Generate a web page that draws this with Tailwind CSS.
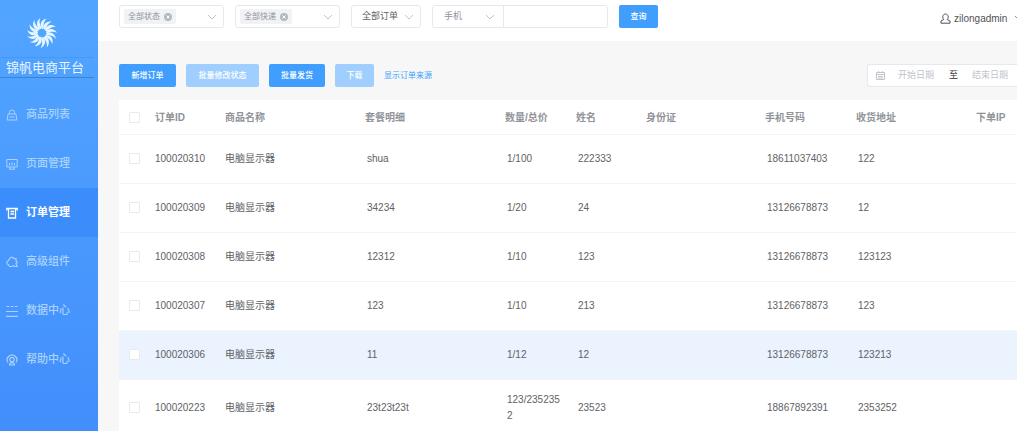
<!DOCTYPE html>
<html lang="zh-CN">
<head>
  <meta charset="UTF-8">
  <title>锦帆电商平台</title>
  <meta name="viewport" content="width=device-width, initial-scale=1.0">
  <script src="https://cdn.jsdelivr.net/npm/@tailwindcss/browser@4"></script>
</head>
<body class="flex h-screen overflow-hidden bg-[#f7f7f7] font-['Liberation_Sans','Noto_Sans_CJK_SC',sans-serif] text-[10px] text-[#606266]">

  <!-- icons -->
  <svg class="hidden">
    <symbol id="chevron" viewBox="0 0 10 10"><path d="M1 3l4 4 4-4" fill="none" stroke="currentColor" stroke-width="1"/></symbol>
    <symbol id="blade" viewBox="-16 -16 32 32"><path d="M.5-4C-3-7.500-1.500-13 4.500-14.500C2-12 1-8.500 2-4.800C1.700-4.200 1-4 .5-4Z"/></symbol>
  </svg>

  <aside class="w-[98px] shrink-0 bg-linear-to-b from-[#52a5ff] to-[#428efc] text-white">
    <div class="flex h-[57px] items-end pb-2 pl-[26px]">
      <svg class="size-8" viewBox="-16 -16 32 32" fill="#e4f6ff">
        <use href="#blade" x="-16" y="-16" width="32" height="32"/>
        <use href="#blade" x="-16" y="-16" width="32" height="32" transform="rotate(24)"/>
        <use href="#blade" x="-16" y="-16" width="32" height="32" transform="rotate(48)"/>
        <use href="#blade" x="-16" y="-16" width="32" height="32" transform="rotate(72)"/>
        <use href="#blade" x="-16" y="-16" width="32" height="32" transform="rotate(96)"/>
        <use href="#blade" x="-16" y="-16" width="32" height="32" transform="rotate(120)"/>
        <use href="#blade" x="-16" y="-16" width="32" height="32" transform="rotate(144)"/>
        <use href="#blade" x="-16" y="-16" width="32" height="32" transform="rotate(168)"/>
        <use href="#blade" x="-16" y="-16" width="32" height="32" transform="rotate(192)"/>
        <use href="#blade" x="-16" y="-16" width="32" height="32" transform="rotate(216)"/>
        <use href="#blade" x="-16" y="-16" width="32" height="32" transform="rotate(240)"/>
        <use href="#blade" x="-16" y="-16" width="32" height="32" transform="rotate(264)"/>
        <use href="#blade" x="-16" y="-16" width="32" height="32" transform="rotate(288)"/>
        <use href="#blade" x="-16" y="-16" width="32" height="32" transform="rotate(312)"/>
        <use href="#blade" x="-16" y="-16" width="32" height="32" transform="rotate(336)"/>
      </svg>
    </div>
    <h1 class="mr-1 mb-3 h-[21px] border-y border-t-[#4a97ec] border-b-[#3f83d0] pl-1.5 text-[13px] leading-[20px] whitespace-nowrap text-[#e8f5ff]">锦帆电商平台</h1>
    <nav class="text-[11px] font-medium text-[#a9d2ff]">
      <a href="#" class="flex h-[49px] items-center gap-2 pl-1.5">
        <svg class="size-3" viewBox="0 0 12 12" fill="none" stroke="currentColor"><path d="M2 5h8l.8 6H1.200zM3.500 5V3.500a2.500 2.500 0 015 0V5M3.500 8h5"/></svg>
        商品列表</a>
      <a href="#" class="flex h-[49px] items-center gap-2 pl-1.5">
        <svg class="size-3" viewBox="0 0 12 12" fill="none" stroke="currentColor"><path d="M.8 1.500h10.400v7.500H.8zM3.500 5v2.500M6 4v3.500M8.500 5v2.500M4 9v2M8 9v2M3 11.200h6"/></svg>
        页面管理</a>
      <a href="#" class="flex h-[49px] items-center gap-2 bg-[#3a8dfa] pl-1.5 font-bold text-white">
        <svg class="size-3" viewBox="0 0 12 12" fill="none" stroke="currentColor" stroke-width="1.300"><path d="M.8 3.500V1.500h10.400v2M2.500 1.500v9.500h7V1.500M4.500 4.500h3.500M4.500 7h3.500"/></svg>
        订单管理</a>
      <a href="#" class="flex h-[49px] items-center gap-2 pl-1.5">
        <svg class="size-3" viewBox="0 0 12 12" fill="none" stroke="currentColor" stroke-width="1.200"><path d="M3.500 3C4 1 7 .5 7.500 2.500H10V5C11.500 5 11.500 7.500 10 7.500L11.200 10.500H8.500C8 9.500 6.500 9.500 6 10.500H3.500L2.500 8.500C.3 8.500.3 5.500 2 5Z"/></svg>
        高级组件</a>
      <a href="#" class="flex h-[49px] items-center gap-2 pl-1.5">
        <svg class="size-3" viewBox="0 0 12 12" fill="none" stroke="currentColor" stroke-width="1.200"><path d="M.5 1.500h3M5 1.500h2.500M9 1.500h2.500M0 6.500h12M0 11.400h12"/></svg>
        数据中心</a>
      <a href="#" class="flex h-[49px] items-center gap-2 pl-1.5">
        <svg class="size-3" viewBox="0 0 12 12" fill="none" stroke="currentColor" stroke-width="1.200"><path d="M2 8.500a4.800 4.800 0 118 0M3.500 11c0-1.500 1-2.300 2.500-2.300s2.500.8 2.500 2.300z"/><circle cx="6" cy="5.500" r="2.200"/></svg>
        帮助中心</a>
    </nav>
  </aside>

  <main class="flex min-w-0 flex-1 flex-col overflow-hidden">
    <header class="flex h-[41px] shrink-0 items-start bg-white pt-[5px] pl-[21px] text-[9px]">
      <div class="flex flex-1 gap-[11px]">
        <div class="flex h-[23px] w-[105px] items-center rounded-[3px] border border-[#e6e8ec] pr-1.5 pl-1">
          <span class="flex h-[15px] items-center gap-1 rounded-[2px] bg-[#f0f2f5] px-1 text-[8px] whitespace-nowrap text-[#909399]">全部状态
            <button aria-label="移除全部状态" class="flex size-2 items-center justify-center rounded-full bg-[#b4b8bf] text-white"><svg class="size-1" viewBox="0 0 4 4" stroke="currentColor"><path d="M.5 .5l3 3M3.500 .5l-3 3"/></svg></button>
          </span>
          <select aria-label="状态" class="min-w-0 flex-1 appearance-none"><option value=""></option></select>
          <svg class="size-2.5 text-[#c0c4cc]"><use href="#chevron"/></svg>
        </div>
        <div class="flex h-[23px] w-[105px] items-center rounded-[3px] border border-[#e6e8ec] pr-1.5 pl-1">
          <span class="flex h-[15px] items-center gap-1 rounded-[2px] bg-[#f0f2f5] px-1 text-[8px] whitespace-nowrap text-[#909399]">全部快递
            <button aria-label="移除全部快递" class="flex size-2 items-center justify-center rounded-full bg-[#b4b8bf] text-white"><svg class="size-1" viewBox="0 0 4 4" stroke="currentColor"><path d="M.5 .5l3 3M3.500 .5l-3 3"/></svg></button>
          </span>
          <select aria-label="快递" class="min-w-0 flex-1 appearance-none"><option value=""></option></select>
          <svg class="size-2.5 text-[#c0c4cc]"><use href="#chevron"/></svg>
        </div>
        <div class="flex h-[23px] w-[70px] items-center rounded-[3px] border border-[#e6e8ec] pr-1.5 pl-2.5">
          <select aria-label="订单" class="min-w-0 flex-1 appearance-none"><option>全部订单</option></select>
          <svg class="size-2.5 text-[#c0c4cc]"><use href="#chevron"/></svg>
        </div>
        <div class="flex h-[23px] w-[176px] rounded-[3px] border border-[#e6e8ec]">
          <div class="flex w-[71px] items-center border-r border-[#e6e8ec] pr-2 pl-[11px] text-[#909399]">
            <select aria-label="查询字段" class="min-w-0 flex-1 appearance-none"><option>手机</option></select>
            <svg class="size-2.5 text-[#c0c4cc]"><use href="#chevron"/></svg>
          </div>
          <input type="text" aria-label="查询内容" class="min-w-0 flex-1 px-2 outline-none">
        </div>
        <button class="h-[23px] w-[39px] rounded-[2px] bg-[#409eff] text-[8px] font-medium text-white">查询</button>
      </div>
      <a href="#" class="flex h-[26px] w-[77px] shrink-0 items-center gap-[3px] overflow-hidden text-[10px] text-[#505256]">
        <svg class="size-[11px] shrink-0" viewBox="0 0 11 11" fill="none" stroke="currentColor"><path d="M3.800 6.500C2 5 2.500 1 5.500 1s3.500 4 1.700 5.500L10 8v2.200H1V8z"/></svg>
        zilongadmin
        <svg class="ml-1 size-2.5 shrink-0 text-[#909399]"><use href="#chevron"/></svg>
      </a>
    </header>

    <section class="flex items-center pt-[23px] pb-[13px] pl-[21px]">
      <div class="flex flex-1 items-center gap-2.5 text-[8px] font-medium text-white">
        <button class="h-[23px] w-[57px] rounded-[2px] bg-[#409eff]">新增订单</button>
        <button class="h-[23px] w-[73px] rounded-[2px] bg-[#a0cfff]" disabled>批量修改状态</button>
        <button class="h-[23px] w-[56px] rounded-[2px] bg-[#409eff]">批量发货</button>
        <button class="h-[23px] w-[39px] rounded-[2px] bg-[#a0cfff]" disabled>下载</button>
        <a href="#" class="font-normal text-[#409eff]">显示订单来源</a>
      </div>
      <div class="flex h-[23px] w-[150px] shrink-0 items-center overflow-hidden rounded-l-[3px] border border-r-0 border-[#e6e8ec] bg-white pl-2 text-[9px]">
        <svg class="mr-[13px] size-[9px] shrink-0 text-[#c0c4cc]" viewBox="0 0 9 9" fill="none" stroke="currentColor"><path d="M.5 1.500h8v7h-8zM.5 3.500h8M2.500 0v2M6.500 0v2M2 5.500h5M2 7h5"/></svg>
        <input type="text" aria-label="开始日期" placeholder="开始日期" class="w-[37px] shrink-0 placeholder:text-[#c0c4cc]">
        <span class="mx-[14px] shrink-0 text-[#303133]">至</span>
        <input type="text" aria-label="结束日期" placeholder="结束日期" class="w-[45px] shrink-0 placeholder:text-[#c0c4cc]">
      </div>
    </section>

    <div class="ml-[21px] flex-1 overflow-hidden bg-white">
      <table class="w-full table-fixed text-left leading-4">
        <colgroup>
          <col class="w-[29px]"><col class="w-[70px]"><col class="w-[140px]"><col class="w-[140px]"><col class="w-[71px]"><col class="w-[70px]"><col class="w-[119px]"><col class="w-[91px]"><col class="w-[120px]"><col>
        </colgroup>
        <thead>
          <tr class="h-[34px] border-b border-[#f3f4f6] text-[#909399] [&>th]:pt-0.5 [&>th]:pl-[7px] [&>th]:font-bold [&>th]:whitespace-nowrap">
            <th><input type="checkbox" aria-label="全选" class="ml-[3px] block size-[11px] appearance-none rounded-[1px] border border-[#e8eaee] bg-white"></th>
            <th>订单ID</th><th>商品名称</th><th>套餐明细</th><th>数量/总价</th><th>姓名</th><th>身份证</th><th>手机号码</th><th>收货地址</th><th>下单IP</th>
          </tr>
        </thead>
        <tbody id="orders"></tbody>
      </table>
    </div>
  </main>

  <script>
    const orders = [
      ["100020310", "电脑显示器", "shua", "1/100", "222333", "", "18611037403", "122", ""],
      ["100020309", "电脑显示器", "34234", "1/20", "24", "", "13126678873", "12", ""],
      ["100020308", "电脑显示器", "12312", "1/10", "123", "", "13126678873", "123123", ""],
      ["100020307", "电脑显示器", "123", "1/10", "213", "", "13126678873", "123", ""],
      ["100020306", "电脑显示器", "11", "1/12", "12", "", "13126678873", "123213", ""],
      ["100020223", "电脑显示器", "23t23t23t", "123/2352352", "23523", "", "18867892391", "2353252", ""],
    ];
    const active = "100020306";

    document.getElementById("orders").innerHTML = orders.map(row => `
      <tr class="border-b border-[#f3f4f6] ${row[0] === active ? "bg-[#eaf3fe]" : ""}">
        <td class="h-[49px] pl-[10px]"><input type="checkbox" aria-label="${row[0]}" class="block size-[11px] appearance-none rounded-[1px] border border-[#e8eaee] bg-white"></td>
        ${row.map((cell, i) => `<td class="${i < 2 ? "pl-[7px]" : "py-3 pr-1.5 pl-[9px] break-all"}">${cell}</td>`).join("")}
      </tr>`).join("");
  </script>
</body>
</html>
